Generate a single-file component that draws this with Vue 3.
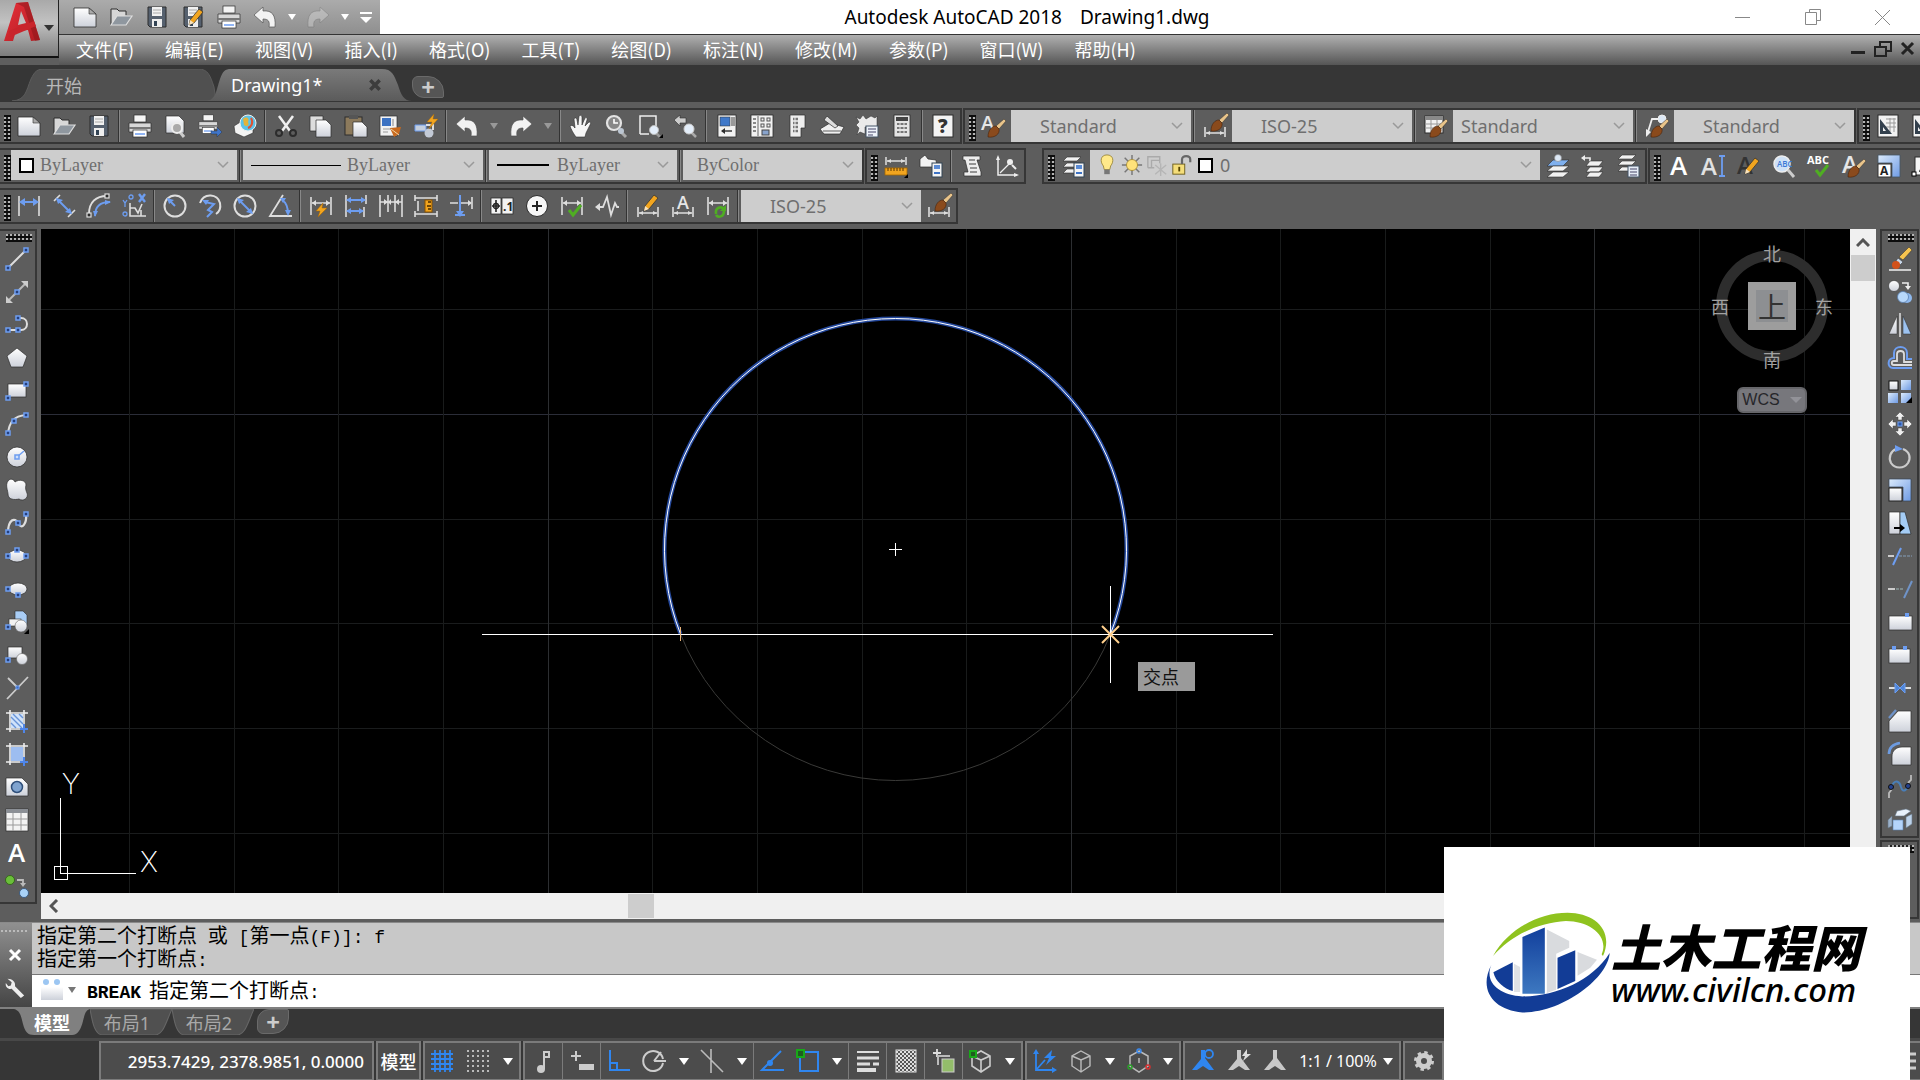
<script setup>
const B = '#6d9df0'
const L = '#dedede'
const G = '#4fae22'
const O = '#f2a51f'
const K = '#2c2c2c'
const W = 'url(#wg)'
const S = 'url(#bg)'

const p = (d, fill = 'none', stroke = 'none', w = 1) =>
  `<path d="${d}" fill="${fill}" stroke="${stroke}" stroke-width="${w}"/>`
const s = (d, stroke = L, w = 2) => p(d, 'none', stroke, w)
const r = (x, y, w, h, fill, stroke = 'none', sw = 1) =>
  `<rect x="${x}" y="${y}" width="${w}" height="${h}" fill="${fill}" stroke="${stroke}" stroke-width="${sw}"/>`
const c = (x, y, rad, fill = 'none', stroke = 'none', w = 1) =>
  `<circle cx="${x}" cy="${y}" r="${rad}" fill="${fill}" stroke="${stroke}" stroke-width="${w}"/>`
const e = (x, y, rx, ry, fill) => `<ellipse cx="${x}" cy="${y}" rx="${rx}" ry="${ry}" fill="${fill}" stroke="${K}" stroke-width="0.7"/>`
const t = (x, y, size, txt, fill = '#fff', weight = 600) =>
  `<text x="${x}" y="${y}" font-size="${size}" fill="${fill}" font-weight="${weight}" font-family="Open Sans, sans-serif">${txt}</text>`
const h = (x, y) => r(x - 2, y - 2, 4, 4, '#27407c', B, 1.5)

const brush = p('M22 5 L24 7 L17 15 L14 12 Z', '#e9c48a', K, 0.5) + p('M6 23 C6 16 10 12 14 12 L17 15 C18 20 13 24 6 23 Z', '#8a4a1c', '#4a240a', 0.6)
const pencil = p('M9 15 L18 4 L22 7 L13 18 L8 20 Z', O, K, 0.7) + p('M9 15 L13 18 L8 20 Z', '#f7e3c0')
const check = s('M9 16 L13 21 L21 11', G, 3)
const floppy = p('M3 2 H21 V22 H5 L3 20 Z', '#56616f', K) + r(7, 2, 10, 9, '#f1f1f1') + s('M8 5 H16 M8 8 H16', '#aaa', 1) + r(7, 14, 10, 8, '#eee') + r(9, 16, 3, 5, '#345')
const printer = r(6, 1, 12, 7, '#f4f4f4', K, 0.7) + p('M1 9 H23 V18 H1 Z', '#d8d8d8', K, 0.7) + r(1, 13, 22, 2, '#777') + r(5, 16, 14, 7, '#fff', K, 0.7) + s('M7 20 H17', B, 1.5)
const dim = s('M2 3 V21 M22 3 V21 M3 9 H21', L, 1.6) + p('M3 9 l4 -3 v6 z M21 9 l-4 -3 v6 z', L)
const dimLow = s('M2 13 V23 M22 13 V23 M3 19 H21', L, 1.6) + p('M3 19 l4 -2 v4 z M21 19 l-4 -2 v4 z', L)
const undo = p('M1 10 L10 2 V6 C19 5 23 10 22 22 H16 C17 16 15 14 10 14 V18 Z', '#f2f2f2', '#555', 0.7)
const redo = `<g transform="matrix(-1 0 0 1 24 0)">${undo}</g>`
const cube = 'M12 2 L21 7 V17 L12 23 L3 17 V7 Z M3 7 L12 11 L21 7 M12 11 V23'
const person = 'M10 1 H14 V9 L23 21 H18 L12 17 L6 21 H1 L10 10 Z'
const layers = p('M6 3 H20 L16 7 H2 Z M6 9 H20 L16 13 H2 Z M6 15 H20 L16 19 H2 Z', '#f1f1f1', K, 0.6)
const frame = s('M5 1 V23 M19 1 V23 M1 4 H23 M1 20 H23', '#eee', 1.6)
const cursorArrow = s('M15 20 H23 M19 15 V24', '#4f86ea', 2)

const icons = {
  new: p('M1 3 H16 L23 9 V22 H1 Z', W, K, 0.8) + p('M16 3 V9 H23 Z', '#aaa', K, 0.6),
  open: p('M2 20 V4 H8 L10 6 H17 V10', '#d7d7d7', K) + p('M2 20 L8 11 H23 L17 20 Z', '#8f979f', L, 1.2),
  save: floppy,
  saveas: floppy + pencil,
  print: printer,
  preview: p('M3 2 H16 L21 7 V19 H3 Z', W, K, 0.7) + s('M17 18 L21 23', '#ccc', 3) + c(14, 14, 5, '#aaa', '#eee', 2),
  publish: `<g transform="scale(.85)">${printer}</g>` + p('M13 17 H19 V13 L24 18 L19 23 V20 H13 Z', '#3f74c8', K, 0.4),
  globe: p('M1 12 L9 7 L20 12 V19 L11 23 L2 19 Z', '#f3f3f3', K, 0.6) + c(15, 9, 8, '#5cc3e8', '#eee') + p('M10 5 C13 2 17 4 15 8 C17 12 13 13 11 11 Z', '#e3b33a') + s('M18 4 C21 9 18 13 15 14', '#de5334', 2),
  cut: s('M5 2 L16 17 M19 2 L8 17', '#f1f1f1', 2.5) + c(5, 19, 3, 'none', K, 2) + c(19, 19, 3, 'none', K, 2),
  copy: p('M1 2 H14 V17 H1 Z', '#ddd', K, 0.7) + p('M7 6 H17 L22 11 V23 H7 Z', W, K, 0.7),
  paste: r(1, 3, 17, 18, '#8c7a5c', K) + r(5, 1, 9, 4, '#555') + p('M9 8 H18 L23 13 V23 H9 Z', W, K, 0.7),
  matchwin: r(1, 2, 17, 20, '#f2f2f2', K, 0.7) + r(3, 4, 9, 8, '#3c72c2') + s('M14 5 V12 M4 15 H12 M4 18 H9', '#999', 1.2) + p('M11 14 L22 13 L20 20 L15 23 Z', '#c96a1e') + s('M12 15 L20 21', '#f5d9a7', 1),
  block: p('M1 11 H12 V17 H1 Z', '#c5cfdd', B, 1) + c(15, 19, 4.5, '#c3cad6') + s('M12 11 L19 11 L19 16', L, 2) + p('M20 0 L13 8 H18 L15 15 L24 5 H19 Z', O, '#a66500', 0.4),
  undo, redo,
  hand: p('M7 23 C4 19 2 15 1 12 C2 11 4 11 6 14 L5 5 C6 3 8 4 8 6 L9 11 L10 2 C11 1 13 1 13 3 L13 11 L16 4 C17 3 19 4 18 6 L16 12 L20 8 C22 8 22 9 21 11 L17 19 L16 23 Z', '#f6f6f6', K, 0.6),
  zoomrt: s('M15 16 L22 23', '#aaa', 3) + c(10, 9, 7, '#888', '#e3e3e3', 2.2) + s('M10 5 V9 H14', '#fff', 1.6) + c(17, 17, 3, '#bcc6d2'),
  zoomwin: s('M1 20 V2 H17 V14', '#eee', 1.5) + s('M1 20 H10', '#eee', 1.5) + s('M17 19 L21 23', '#999', 2.5) + c(15, 16, 4.5, '#e4eefa', '#bbb') + p('M24 20 V24 H20 Z', '#000'),
  zoomprev: p('M0 6 L6 1 V4 H12 V9 H6 V12 Z', '#ccc', K, 0.6) + s('M17 18 L22 23', '#aaa', 2.5) + c(15, 15, 5, '#e4eefa', '#ccc'),
  props: r(3, 1, 18, 22, '#f2f2f2', K, 0.8) + r(5, 3, 10, 9, '#3f78c9', K, 0.5) + r(16, 3, 4, 9, '#999') + s('M7 17 H17', K, 1.4) + p('M6 17 l4 -3 v6 z', K),
  dcenter: r(1, 1, 22, 22, '#f2f2f2', K, 0.8) + s('M8 2 V22', '#666', 1) + s('M3 5 H6 M3 9 H6 M3 13 H6 M3 17 H6', '#666', 1.5) + r(11, 4, 3, 3, 'none', '#555') + r(17, 4, 3, 3, 'none', '#555') + r(11, 10, 3, 3, 'none', '#555') + r(17, 10, 3, 3, 'none', '#555') + r(12, 16, 7, 5, '#88a3cc', '#444'),
  palettes: p('M5 1 H20 V14 H16 V23 H5 Z', '#eee', K, 0.7) + s('M8 5 H13 M8 9 H13 M8 13 H13 M8 17 H13', '#777', 2.4) + s('M10 3 V20', '#eee', 1),
  sheets: p('M0 15 L10 9 L24 13 L20 20 H4 Z', '#f0f0f0', K, 0.7) + p('M7 2 L18 12 L15 14 L4 6 Z', '#ddd', K, 0.7) + s('M3 17 H21', '#888', 1.4),
  markup: p('M1 3 L5 5 L8 1 L11 5 L16 2 L20 4 L22 2 V13 H10 V20 L5 18 L2 21 L4 14 L1 11 L4 8 Z', '#eaeaea', K, 0.5) + r(11, 12, 12, 11, '#eef3fa', '#456') + s('M13 15 H21 M13 18 H21 M13 21 H18', '#446', 1),
  calc: r(4, 1, 16, 22, '#e4e4e4', K, 0.8) + r(6, 3, 12, 4, '#444') + s('M7 10 H17 M7 14 H17 M7 18 H17', '#777', 2) + s('M10 8 V20 M14 8 V20', '#e4e4e4', 1),
  help: r(2, 1, 20, 22, '#f3f3f3', K) + t(7, 19, 19, '?', '#333', 800),
  astyle: t(-1, 16, 20, 'A', '#e6e6e6') + brush,
  dimstyle: dimLow + `<g transform="translate(2 -6)">${brush}</g>`,
  tablestyle: r(1, 2, 18, 17, '#f2f2f2', K) + r(1, 2, 18, 4, '#888') + s('M7 6 V19 M13 6 V19 M1 10 H19 M1 14 H19', '#999', 1) + brush,
  leaderstyle: s('M2 21 L7 5 H14', '#eee', 1.8) + p('M1 23 L1 15 L6 18 Z', '#eee') + c(17, 5, 4, '#dce8f5', '#eee') + brush,
  setsq: r(2, 1, 20, 22, '#f2f2f2', K) + s('M10 5 H20 M10 9 H20 M10 13 H20 M14 4 V18 M18 4 V18', '#999', 1) + p('M4 5 L16 20 H4 Z M7 13 V17 H10 Z', '#33404d'),
  measure: s('M2 3 V11 M22 3 V11 M3 7 H21', L, 1.5) + p('M3 7 l4 -2 v4 z M21 7 l-4 -2 v4 z', L) + r(1, 14, 22, 7, O, '#a86a00', 0.8) + s('M4 14 V17 M7 14 V17 M10 14 V17 M13 14 V17 M16 14 V17 M19 14 V17', '#5a3500', 1) + p('M24 20 V24 H20 Z', '#000'),
  region: p('M1 5 L6 1 L9 5 L17 6 L18 13 H1 Z', '#f3f3f3', K, 0.7) + r(13, 9, 10, 14, '#f4f4f4', '#345') + r(15, 11, 6, 4, '#5b8bd4') + s('M15 19 H21', '#3d73c5', 2),
  script: p('M3 2 H20 V6 H17 L21 18 V22 H4 V18 H8 L5 6 H3 Z', '#ededed', K, 0.7) + s('M9 6 H15 M9 10 H16 M10 14 H17 M10 18 H17', '#777', 1.3),
  ucsicon: s('M3 3 V21 H22', '#eee', 1.5) + p('M3 1 l-2 5 h4 z M24 21 l-5 -2 v4 z', '#eee') + s('M5 19 L14 10', '#eee', 1.2) + c(15, 8, 3, '#eee') + s('M17 11 L21 15', '#eee'),
  layerprop: layers + r(13, 9, 10, 14, '#f4f4f4', '#345') + r(15, 11, 6, 4, '#5b8bd4') + s('M15 19 H21', '#3d73c5', 2),
  layercur: p('M7 6 H23 L17 12 H1 Z', '#7fb0ee', K, 0.6) + p('M7 12 H23 L17 17 H1 Z M7 18 H23 L17 23 H1 Z', '#f1f1f1', K, 0.6) + c(12, 4, 3.5, '#dce8f5', '#888', 0.6),
  layerprev: s('M3 4 H9 V8', '#eee', 1.6) + p('M0 4 l4 -3 v6 z', '#eee') + p('M9 7 H22 L18 12 H5 Z M9 13 H22 L18 18 H5 Z M9 18 H22 L18 23 H5 Z', '#f1f1f1', K, 0.6),
  layerstate: `<g transform="translate(0 -2)">${layers}</g>` + r(12, 12, 11, 11, '#e6edf7', '#456') + s('M14 15 H21 M14 18 H21 M14 21 H21', '#446', 1.2),
  bulb: p('M12 1 C5 1 4 8 8 13 L9 17 H15 L16 13 C20 8 19 1 12 1 Z', '#ffe98a', '#8a7420', 0.8) + r(9, 17, 6, 5, '#777'),
  sun: s('M12 1 V23 M1 12 H23 M4 4 L20 20 M20 4 L4 20', '#777', 1.6) + c(12, 12, 6, '#ffe27a', '#a08222', 0.8),
  vpfreeze: s('M2 15 V3 H15 V10 M15 7 H6 V15 M2 15 H9', '#aaa', 1.5) + s('M10 12 L22 22 M22 12 L10 22 M16 10 V24', '#b5b5b5', 1.5),
  unlock: r(2, 11, 13, 11, '#f5de7a', '#6a5b1a') + s('M12 11 V6 C12 1 21 1 21 6 V9', '#666', 2.4) + r(8, 14, 2, 5, '#554400'),
  mtext: t(3, 21, 26, 'A'),
  dtext: t(-1, 21, 24, 'A', '#e2e2e2') + s('M20 2 V22 M17 2 H23 M17 22 H23', B, 1.8),
  edtext: t(0, 20, 24, 'A', '#333') + pencil,
  findtext: s('M16 16 L22 23', '#ccc', 3) + c(10, 10, 8, '#cfe2f7', '#eee', 1.5) + t(5, 13, 8, 'ABC', '#3c7ad6'),
  spell: t(0, 10, 11, 'ABC', '#fff', 700) + check,
  tstyle: t(0, 19, 24, 'A', '#e6e6e6') + brush,
  scaletext: p('M1 1 H23 V23 H15 V9 H1 Z', S, '#456', 0.8) + r(1, 10, 13, 13, '#fff', '#333') + t(3, 21, 12, 'A', '#222', 700),
  justify: r(3, 3, 20, 18, '#f5f5f5', K) + s('M8 18 L14 6 L18 18 M10 14 H17', '#222', 2.4) + r(0, 18, 4, 4, '#fff', '#000'),
  // dimension row
  dimlin: s('M2 2 V22 M22 2 V22', L, 1.6) + s('M4 8 H20', B, 2) + p('M2 8 l6 -4 v8 z M22 8 l-6 -4 v8 z', B),
  dimali: s('M2 7 L8 1 M16 23 L23 16', L, 1.6) + s('M5 5 L19 19', B, 2) + p('M4 4 l7 2 l-5 4 z M20 20 l-7 -2 l5 -4 z', B),
  dimarc: s('M2 20 C2 8 9 2 20 2', L, 1.8) + s('M8 22 C8 12 13 8 23 8', B, 1.8) + r(0, 19, 4, 4, K, L, 1.2) + r(18, 0, 4, 4, K, L, 1.2) + p('M8 23 l-2 -6 h5 z M24 8 l-6 -2 v5 z', B),
  dimord: s('M1 6 L3 9 L5 6 M3 9 V13', B, 1.3) + c(3, 20, 2, 'none', B, 1.3) + c(9, 3, 2, 'none', B, 1.3) + s('M17 0 L23 8 M23 0 L17 8', B, 2.4) + s('M8 9 V22 H24 M8 14 L13 14 L16 19 L20 10 M19 22 V16', L, 1.6),
  dimrad: c(12, 12, 10.5, 'none', L, 2) + s('M5 5 L12 12', B, 2) + p('M4 4 l7 2 l-5 4 z', B),
  dimjog: s('M2 9 C6 -2 20 0 22 9 C23 14 21 18 18 20', L, 2) + s('M7 8 L16 10 L10 16 L14 18 L9 23', B, 2) + p('M4 6 l7 0 l-3 5 z', B),
  dimdia: c(12, 12, 10.5, 'none', L, 2) + s('M6 6 L18 18', B, 2) + p('M4 4 l7 2 l-5 4 z M20 20 l-7 -2 l5 -4 z', B),
  dimang: s('M15 1 L2 22 H24', L, 1.8) + s('M14 6 C19 9 20 15 20 20', B, 2) + p('M12 4 l6 0 l-3 5 z M20 22 l-3 -6 h6 z', B),
  dimquick: dim + p('M14 9 L7 17 H11 L9 23 L18 14 H13 Z', O, '#a66500', 0.5),
  dimbase: s('M2 1 V23 M22 1 V10 M20 13 V23', L, 1.6) + s('M3 6 H21 M3 17 H19', B, 2) + p('M2 6 l5 -3 v6 z M22 6 l-5 -3 v6 z M2 17 l5 -3 v6 z M20 17 l-5 -3 v6 z', B),
  dimcont: s('M1 1 V23 M9 1 V18 M16 1 V18 M23 1 V23 M1 8 H23', L, 1.6) + p('M9 8 l-4 -3 v6 z M9 8 l3 -3 v6 z M16 8 l4 -3 v6 z', L),
  dimspace: s('M1 1 V7 M23 1 V7 M1 4 H23 M1 17 V23 M23 17 V23 M1 20 H23', L, 1.6) + s('M4 7 V17', L, 1.6) + r(11, 6, 7, 12, O, '#8a5300') + s('M14 8 H17 M13 12 H17 M14 15 H17', '#4a2b00', 1.4),
  dimbreak: s('M1 9 H9 M12 9 H22 M23 3 V15', L, 1.6) + p('M23 9 l-4 -3 v6 z', L) + s('M11 1 V20 M6 21 H16', B, 2) + p('M11 23 l-4 -6 h8 z', B),
  tol: r(1, 4, 10, 16, '#f3f3f3', K, 0.8) + r(12, 4, 11, 16, '#f3f3f3', K, 0.8) + s('M6 6 V18 M2 12 H10', '#222', 1.6) + c(6, 12, 2.5, 'none', '#222', 1.3) + t(13, 17, 12, '.1', '#222', 700),
  cmark: c(12, 12, 10.5, '#f6f6f6', K) + s('M12 7 V17 M7 12 H17', '#222', 2),
  dimins: dim + check,
  jogline: s('M2 13 H8 L12 3 L16 21 L20 9 L22 13 H24', L, 1.8) + p('M0 13 l5 -4 v8 z', L),
  dimedit: dimLow + `<g transform="translate(0 -3)">${pencil}</g>`,
  dimtedit: dimLow + t(6, 15, 18, 'A', '#e6e6e6'),
  dimupd: dim + s('M10 20 C9 13 15 12 18 15 M18 17 C18 23 12 24 10 21', G, 2.6) + p('M20 11 V17 H14 Z', G),
  // draw column
  line: s('M3 21 L21 3', L, 2) + h(3, 21) + h(21, 3),
  xline: s('M4 20 L20 4', '#bbb', 2) + p('M1 23 V16 L8 23 Z M23 1 H16 L23 8 Z', '#ccc') + h(12, 12),
  pline: s('M3 17 H16 C24 17 24 5 16 5 H13', L, 2) + h(3, 17) + h(13, 17) + h(13, 5),
  polygon: p('M12 2 L22 10 L18 21 H6 L2 10 Z', W, K, 0.7),
  rect: r(3, 5, 18, 13, W, K, 0.7) + h(3, 19) + h(21, 5),
  arc: s('M3 22 C4 10 9 4 21 3', L, 2) + h(3, 21) + h(9, 9) + h(21, 3),
  circle: c(12, 12, 10, W, K, 0.7) + s('M12 12 L19 6', B, 1.5) + r(10, 10, 4, 4, '#cfe0fa', B, 1.5),
  cloud: p('M3 3 C5 0 9 1 10 4 C14 1 21 2 21 7 C20 10 21 13 22 15 C24 20 18 24 14 21 C10 22 3 22 3 16 C3 13 0 7 3 3 Z', W, K, 0.7),
  spline: s('M3 22 C3 8 10 6 13 12 C17 20 22 12 21 3', L, 2.2) + h(3, 21) + h(13, 12) + h(21, 3),
  ellipse: e(12, 12, 9, 6, W) + h(3, 12) + h(21, 12) + h(12, 6),
  earc: e(13, 12, 9, 6, W) + h(3, 12) + h(13, 18),
  insert: p('M10 1 H18 L22 5 V16 H10 Z', '#a9cdf5', K, 0.6) + r(4, 9, 12, 7, '#f1f1f1', K, 0.6) + c(16, 16, 6, W, '#666', 0.6) + h(3, 17) + p('M24 19 V24 H19 Z', '#000'),
  mkblock: r(3, 4, 14, 11, W, K, 0.7) + c(17, 16, 5.5, W, '#666', 0.6) + h(3, 17),
  point: s('M3 2 L12 11 M23 1 L2 23', '#ccc', 1.8) + r(11, 10, 3, 3, '#3c6cc5', B),
  hatch: frame + r(6, 5, 12, 14, '#cfe2fa') + s('M6 8 L17 19 M6 14 L11 19 M8 5 L18 15 M14 5 L18 9', '#6893d8', 1.4) + cursorArrow,
  gradient: frame + r(6, 5, 12, 14, '#9dbdf0') + cursorArrow,
  regionD: p('M1 3 H17 L23 9 V21 H1 Z', W, K, 0.7) + c(12, 12, 5.5, '#7fa3cf', '#2f4f7a', 1.5),
  table: r(1, 1, 22, 22, '#f3f3f3', K, 0.7) + r(1, 1, 22, 4, '#8b8f95') + s('M8 5 V23 M16 5 V23 M1 11 H23 M1 17 H23', '#999', 1),
  addsel: c(5, 6, 4.5, '#6abf3a', '#2c5c12', 0.8) + s('M12 6 H18 V10', '#bbb', 1.8) + p('M18 13 l-3 -4 h6 z', '#bbb') + c(19, 19, 4.5, '#a9d2f7', '#2c4f7a', 0.8),
  // modify column
  erase: s('M1 23 H23', '#ccc', 2) + p('M21 0 L24 3 L15 13 L11 10 Z', '#f6c44f', K, 0.5) + p('M10 11 L15 15 L12 18 L8 14 Z', '#c9d8ea', K, 0.5) + c(8, 18, 4, '#d2521b'),
  copyM: c(6, 6, 5.5, W, K, 0.6) + s('M14 3 H20 V7', '#eee', 1.6) + p('M20 10 l-3 -4 h6 z', '#eee') + c(19, 18, 5, '#8fb9ee') + c(15, 17, 5.5, '#b8d8fa', '#5a7fae', 0.8),
  mirror: p('M9 3 V21 H1 Z', W, K, 0.5) + p('M15 3 V21 H23 Z', '#9cc2f0', K, 0.5) + s('M12 0 V24', '#ccc', 1.8),
  offset: s('M24 13 H19 V7 C19 -1 6 -1 6 7 V12 C-1 12 -1 22 5 22 H24', B, 2) + s('M24 19 H6 C3 19 3 15 6 15 H9 V8 C9 4 16 4 16 8 V16 H24', '#ddd', 1.8),
  array: r(1, 2, 9, 9, W, '#111', 1) + r(13, 1, 10, 10, S) + r(0, 14, 10, 10, S) + r(13, 14, 10, 10, S) + p('M24 18 V24 H18 Z', '#000'),
  move: p('M12 0 L17 5 H14 V8 H10 V5 H7 Z M12 24 L17 19 H14 V16 H10 V19 H7 Z M0 12 L5 7 V10 H8 V14 H5 V17 Z M24 12 L19 7 V10 H16 V14 H19 V17 Z', '#eee', '#444', 0.5) + r(10, 10, 4, 4, '#2c57a8', B),
  rotate: s('M15 4 C22 7 23 13 20 18 C16 24 7 24 3 18 C0 12 3 6 8 4', '#ccc', 2.2) + p('M7 0 V7 L15 4 Z', B),
  scale: p('M1 1 H23 V23 H15 V9 H1 Z', S, '#345', 0.7) + r(1, 10, 13, 13, W, '#222', 1),
  stretch: p('M1 1 H12 V23 H1 Z', W, K, 0.7) + p('M12 1 H17 L23 23 H12 Z', '#a4ccf5', K, 0.7) + s('M6 17 H13', '#000', 2) + p('M17 17 l-5 -4 v8 z', '#000'),
  trim: s('M0 12 H6', '#ccc', 2) + `<path d="M11 12 H24" stroke="#789" stroke-width="1.5" stroke-dasharray="3 1"/>` + s('M5 21 L13 4', B, 2),
  extend: s('M0 12 H7', '#ccc', 2) + `<path d="M8 12 H16" stroke="#899" stroke-width="1.5" stroke-dasharray="3 1"/>` + s('M16 21 L24 4', '#6f93c8', 2),
  breakpt: r(1, 6, 23, 14, W, K, 0.7) + r(17, 3, 4, 4, B),
  break: r(1, 6, 21, 14, W, K, 0.7) + r(4, 3, 4, 4, B) + r(15, 3, 4, 4, B),
  join: s('M1 12 H23', '#eee', 1.8) + p('M7 7 L12 12 L7 17 Z M17 7 L12 12 L17 17 Z', '#4f86d8', B),
  chamfer: p('M10 2 H23 V23 H1 V12 Z', W, K, 0.7) + s('M1 9 L8 1', '#6d92c8', 2.4),
  fillet: p('M14 5 H23 V23 H4 V14 C4 9 8 5 14 5 Z', W, K, 0.7) + s('M1 12 C1 5 5 2 12 1', '#6d9be0', 2.6),
  blend: s('M1 23 V18 L4 14 M20 8 L23 5 V0', '#bbb', 1.8) + s('M3 12 C8 2 12 8 13 12 C15 19 19 14 21 11', '#4a7fb8', 2) + c(3, 12, 2.5, '#24418f', '#111') + c(20, 11, 2.5, '#24418f', '#111'),
  explode: p('M5 12 H15 V22 H5 Z', '#b4d4fa', '#5b7fae', 0.6) + p('M9 3 L18 1 L23 3 L16 8 H7 Z', '#e8f1fb', '#678', 0.6) + p('M18 9 L24 6 V16 L18 20 Z', '#bcd2ea', '#678', 0.6) + p('M0 12 L4 8 V18 L0 20 Z', '#9ab0c8', '#678', 0.6),
  wrench: p('M3 1 L8 5 L7 9 L4 10 L1 6 C0 11 4 14 8 13 L19 24 L23 21 L12 10 C13 5 9 1 3 1 Z', '#eee'),
  // status bar
  grid: s('M4 1 V23 M9 1 V23 M14 1 V23 M19 1 V23 M0 5 H22 M0 10 H22 M0 15 H22 M0 20 H22', '#2f86f0', 1.8),
  snap: `<path d="M0 2 H22 M0 7 H22 M0 12 H22 M0 17 H22 M0 22 H22" stroke="#bbb" stroke-width="2" stroke-dasharray="2 3"/>`,
  infer: s('M12 20 V3 H17 V8 H12', '#ccc', 2) + c(9, 20, 4, '#ccc'),
  dyn: s('M6 2 V12 M1 7 H11', '#ccc', 2) + r(9, 15, 15, 6, '#ccc', 'none'),
  ortho: s('M3 1 V21 H23 M3 14 H10 V21', '#2f86f0', 2),
  polar: s('M20 10 A10 10 0 1 0 20 14 M11 12 H23 M11 12 L18 3', '#ccc', 2),
  iso: s('M0 1 L22 23 M10 0 V24', '#bbb', 1.6),
  otrack: s('M24 21 H2 L21 2', '#2f86f0', 2) + c(10, 14, 3, '#2f86f0'),
  osnap: r(4, 3, 18, 19, 'none', '#2f86f0', 2) + r(1, 1, 7, 7, '#1f5c1f', '#18a818', 2),
  lwt: s('M1 3 H23', '#ddd', 2) + s('M1 9 H23', '#ddd', 3) + s('M1 15 H14 M17 15 H23', '#ddd', 3) + s('M1 21 H20', '#ddd', 4),
  trans: `<rect x="2" y="1" width="20" height="22" fill="url(#chk)" stroke="#ddd"/>`,
  cycle: s('M5 0 V8 M1 4 H9', '#ddd', 1.8) + s('M6 16 V7 H18', '#bbb', 2) + r(10, 10, 12, 13, '#93bd6a', '#ccc', 1),
  osnap3: s(cube, '#ccc', 1.6) + r(1, 2, 6, 6, '#1f5c1f', '#18a818', 2),
  ducs: s('M3 2 V21 H22 M3 21 L12 11', '#2f86f0', 1.8) + p('M3 0 l-3 5 h6 z M24 21 l-5 -3 v6 z M19 1 L11 9 H16 L13 16 L23 7 H18 Z', '#2f86f0'),
  selfilt: s(cube, '#bbb', 1.4),
  gizmo: s('M12 2 L21 7 V17 L12 23 L3 17 V7 Z M12 9 V14', '#bbb', 1.5) + c(12, 2, 2, 'none', '#3b8af0', 1.5) + c(3, 18, 2, 'none', '#28a028', 1.5) + c(21, 18, 2, 'none', '#d83030', 1.5),
  annoA: p(person, '#2f86f0') + c(18, 5, 4, '#4c4c4c', '#2f86f0', 1.8),
  annoB: p(person, '#c8c8c8') + p('M20 0 L15 7 H18 L16 12 L24 5 H20 Z', '#ddd'),
  annoC: p(person, '#c8c8c8'),
  gear: `<circle cx="12" cy="12" r="8" fill="none" stroke="#ccc" stroke-width="4" stroke-dasharray="3.14 3.14"/>` + c(12, 12, 5.5, 'none', '#ccc', 5),
}

const SEP = '|'
const DROP = 'v'
const combo = (label, text, size, opt = {}) => ({ label, text, size, ...opt })

const rows = [
  [
    ['new', 'open', 'save', SEP, 'print', 'preview', 'publish', 'globe', SEP, 'cut', 'copy', 'paste', 'matchwin', 'block', SEP,
      'undo', DROP, 'redo', DROP, SEP, 'hand', 'zoomrt', 'zoomwin', 'zoomprev', SEP, 'props', 'dcenter', 'palettes', 'sheets', 'markup', 'calc', SEP, 'help'],
    ['astyle', combo('文字样式', 'Standard', 'std', { inset: true }), SEP, 'dimstyle', combo('标注样式', 'ISO-25', 'std', { inset: true }), SEP,
      'tablestyle', combo('表格样式', 'Standard', 'std'), SEP, 'leaderstyle', combo('多重引线样式', 'Standard', 'std', { inset: true })],
    ['setsq', 'setsq'],
  ],
  [
    [combo('颜色', 'ByLayer', 'color', { lead: 'swatch', serif: true }), SEP, combo('线型', 'ByLayer', 'ltype', { lead: 'thin', serif: true }), SEP,
      combo('线宽', 'ByLayer', 'lweight', { lead: 'thick', serif: true }), SEP, combo('打印样式', 'ByColor', 'std', { serif: true, mid: true })],
    ['measure', 'region', SEP, 'script', 'ucsicon'],
    ['layerprop', combo('图层', '0', 'layer', { lead: 'layer' }), 'layercur', 'layerprev', 'layerstate'],
    ['mtext', 'dtext', 'edtext', 'findtext', 'spell', 'tstyle', 'scaletext', 'justify'],
  ],
  [
    ['dimlin', 'dimali', 'dimarc', 'dimord', SEP, 'dimrad', 'dimjog', 'dimdia', 'dimang', SEP, 'dimquick', 'dimbase', 'dimcont', 'dimspace', 'dimbreak', SEP,
      'tol', 'cmark', 'dimins', 'jogline', SEP, 'dimedit', 'dimtedit', 'dimupd', SEP, combo('当前标注样式', 'ISO-25', 'std', { inset: true }), 'dimstyle'],
  ],
]

const quick = ['new', 'open', 'save', 'saveas', 'print', 'undo', DROP, 'redo', DROP]
const menus = ['文件(F)', '编辑(E)', '视图(V)', '插入(I)', '格式(O)', '工具(T)', '绘图(D)', '标注(N)', '修改(M)', '参数(P)', '窗口(W)', '帮助(H)']
const drawTools = ['line', 'xline', 'pline', 'polygon', 'rect', 'arc', 'circle', 'cloud', 'spline', 'ellipse', 'earc', 'insert', 'mkblock', 'point', 'hatch', 'gradient', 'regionD', 'table', 'mtext', 'addsel']
const modifyTools = ['erase', 'copyM', 'mirror', 'offset', 'array', 'move', 'rotate', 'scale', 'stretch', 'trim', 'extend', 'breakpt', 'break', 'join', 'chamfer', 'fillet', 'blend', 'explode']

const statusGroups = [
  [['grid', 'snap', DROP]],
  [['infer'], ['dyn'], ['ortho', 'polar', DROP, 'iso', DROP], ['otrack', 'osnap', DROP], ['lwt'], ['trans'], ['cycle'], ['osnap3', DROP]],
  [['ducs', 'selfilt', DROP, 'gizmo', DROP]],
  [['annoA', 'annoB', 'annoC', '#1:1 / 100%', DROP]],
  [['gear']],
]

const gridX = Array.from({ length: 17 }, (_, i) => ({ at: Math.round(88 + i * 104.67), major: i % 5 === 4 }))
const gridY = Array.from({ length: 6 }, (_, i) => ({ at: Math.round(80 + i * 104.75), major: i === 1 }))
</script>

<template>
  <div class="app">
    <svg class="defs" width="0" height="0" aria-hidden="true">
      <defs>
        <linearGradient id="wg" x1="0" y1="0" x2="0" y2="1"><stop offset="0" stop-color="#fff" /><stop offset="1" stop-color="#cdd1da" /></linearGradient>
        <linearGradient id="bg" x1="0" y1="0" x2="1" y2="1"><stop offset="0" stop-color="#dcebfc" /><stop offset="1" stop-color="#6f9be4" /></linearGradient>
        <linearGradient id="tabOn" x1="0" y1="0" x2="0" y2="1"><stop offset="0" stop-color="#7a7a7a" /><stop offset="1" stop-color="#5b5b5b" /></linearGradient>
        <linearGradient id="red" x1="0" y1="0" x2="1" y2="1"><stop offset="0" stop-color="#e8303a" /><stop offset="1" stop-color="#b01c22" /></linearGradient>
        <linearGradient id="tower" x1="0" y1="0" x2="0" y2="1"><stop offset="0" stop-color="#123f9c" /><stop offset="1" stop-color="#3d78c0" /></linearGradient>
        <pattern id="chk" width="4" height="4" patternUnits="userSpaceOnUse"><rect width="4" height="4" fill="#555" /><path d="M0 0h2v2H0zM2 2h2v2H2z" fill="#ddd" /></pattern>
      </defs>
    </svg>

    <header class="head">
      <button class="appbtn" aria-label="应用程序菜单">
        <svg width="36" height="42" viewBox="0 0 36 42">
          <path d="M0 40 L12 2 L24 1 L36 39 L27 40 L24 29 L12 30 L9 40 Z M17 10 L14 24 L22 22 Z" fill="url(#red)" fill-rule="evenodd" />
          <path d="M12 2 L24 1 L36 39 L31 40 L20 6 Z" fill="#8e171c" opacity=".55" />
          <path d="M5 30 L30 20 L32 25 L6 36 Z" fill="#c9242b" />
        </svg>
        <i class="tri dark"></i>
      </button>
      <div class="headrows">
        <div class="titlebar">
          <div class="quick">
            <template v-for="(q, i) in quick" :key="i">
              <button v-if="q === DROP" class="drop" aria-label="展开"><i class="tri"></i></button>
              <button v-else class="tool" :class="{ faded: q === 'redo' }" :aria-label="q"><svg class="ico" viewBox="0 0 24 24" v-html="icons[q]"></svg></button>
            </template>
            <button class="drop more" aria-label="自定义"><i class="bar"></i><i class="tri"></i></button>
          </div>
          <h1 class="title"><span>Autodesk AutoCAD 2018</span><span>Drawing1.dwg</span></h1>
          <div class="wincontrols">
            <button aria-label="最小化"><svg width="16" height="16"><path d="M0 8.5H15" /></svg></button>
            <button aria-label="还原"><svg width="16" height="16"><path d="M.5 3.5H11.500V15.500H.5ZM4.500 3.500V.5H15.500V11.500H11.500" /></svg></button>
            <button aria-label="关闭"><svg width="16" height="16"><path d="M0 1L15 16M15 1L0 16" /></svg></button>
          </div>
        </div>
        <nav class="menubar">
          <button v-for="m in menus" :key="m">{{ m }}</button>
          <div class="mdi">
            <button aria-label="最小化图形"><svg width="18" height="18"><path d="M2 12.500H16" stroke-width="3" /></svg></button>
            <button aria-label="还原图形"><svg width="18" height="18"><path d="M1 7H12V16H1ZM6 7V2H17V11H12" stroke-width="2" /></svg></button>
            <button aria-label="关闭图形"><svg width="18" height="18"><path d="M3 3L14 14M14 3L3 14" stroke-width="3" /></svg></button>
          </div>
        </nav>
      </div>
    </header>

    <div class="filetabs">
      <button class="ftab">
        <svg viewBox="0 0 206 32" preserveAspectRatio="none"><path d="M0 32 C14 31 14 22 19 10 C23 2 25 0 33 0 H186 C196 0 198 6 202 18 L204 32 Z" fill="#505050" stroke="#5c5c5c" /></svg>
        <span>开始</span>
      </button>
      <button class="ftab on">
        <svg viewBox="0 0 206 32" preserveAspectRatio="none"><path d="M0 32 C10 31 10 22 14 10 C17 2 19 0 25 0 H176 C186 0 188 6 192 16 C195 26 198 32 206 32 Z" fill="url(#tabOn)" /></svg>
        <span>Drawing1*</span>
        <svg class="x" viewBox="0 0 12 12"><path d="M2 2L10 10M10 2L2 10" stroke="#3c3c3c" stroke-width="3" /></svg>
      </button>
      <button class="plus up" aria-label="新图形">+</button>
    </div>

    <div class="toolbars">
      <div v-for="(row, ri) in rows" :key="ri" class="trow" :class="'row' + (ri + 1)">
        <div v-for="(bar, bi) in row" :key="bi" class="bar-frame">
          <i class="grip"></i>
          <template v-for="(it, i) in bar" :key="i">
            <i v-if="it === SEP" class="sep"></i>
            <button v-else-if="it === DROP" class="drop" aria-label="展开"><i class="tri dim"></i></button>
            <button v-else-if="typeof it === 'string'" class="tool" :aria-label="it"><svg class="ico" viewBox="0 0 24 24" v-html="icons[it]"></svg></button>
            <label v-else class="combo" :class="[it.size, { inset: it.inset, mid: it.mid, serif: it.serif }]">
              <i v-if="it.lead === 'swatch'" class="swatch"></i>
              <i v-else-if="it.lead === 'thin' || it.lead === 'thick'" :class="it.lead"></i>
              <template v-else-if="it.lead === 'layer'">
                <svg v-for="n in ['bulb', 'sun', 'vpfreeze', 'unlock']" :key="n" class="ico" viewBox="0 0 24 24" v-html="icons[n]"></svg>
                <i class="swatch"></i>
              </template>
              <select :aria-label="it.label" disabled><option>{{ it.text }}</option></select>
              <svg class="chev" viewBox="0 0 12 8"><path d="M1 1L6 6L11 1" /></svg>
            </label>
          </template>
        </div>
      </div>
    </div>

    <main class="work">
      <aside class="side left">
        <div class="side-frame">
          <i class="grip h"></i>
          <button v-for="n in drawTools" :key="n" :aria-label="n"><svg class="ico" viewBox="0 0 24 24" v-html="icons[n]"></svg></button>
        </div>
      </aside>

      <div class="view">
        <div class="canvas">
          <svg class="drawing">
            <g shape-rendering="crispEdges">
              <line v-for="g in gridY" :key="'y' + g.at" x1="0" x2="100%" :y1="g.at" :y2="g.at" :stroke="g.major ? '#2b2d38' : '#1a1c1d'" />
              <line v-for="g in gridX" :key="'x' + g.at" y1="0" y2="100%" :x1="g.at" :x2="g.at" :stroke="g.major ? '#2c2e31' : '#191b1b'" />
            </g>
            <path d="M639.500 405 A231 231 0 0 0 1069.500 405" fill="none" stroke="#3a3a38" />
            <path d="M639.500 405 A231 231 0 1 1 1069.500 405" fill="none" stroke="#24489c" stroke-width="4" />
            <path d="M639.500 405 A231 231 0 1 1 1069.500 405" fill="none" stroke="#fff" stroke-width="1" />
            <g fill="none" stroke="#fff" shape-rendering="crispEdges">
              <path d="M441 405.500H1232M1069.500 357V454M848 320.500H861M854.500 314V327" />
              <path d="M19.500 569V644.500H95M13.500 637.500H26.500V650.500H13.500Z" />
            </g>
            <path d="M639.500 398V412" stroke="#e6b27a" />
            <path d="M1061 397L1078 414M1078 397L1061 414" stroke="#ffd08c" stroke-width="2" />
            <text class="axis" x="30" y="565">Y</text>
            <text class="axis" x="108" y="643">X</text>
          </svg>
          <span class="tip">交点</span>
          <div class="cube">
            <div class="compass">
              <span class="n">北</span><span class="w">西</span><button class="face">上</button><span class="e">东</span><span class="s">南</span>
            </div>
            <button class="wcs">WCS <i class="tri"></i></button>
          </div>
        </div>
        <div class="hscroll">
          <svg viewBox="0 0 10 14"><path d="M8 1L2 7L8 13" /></svg>
          <i></i>
        </div>
      </div>
      <div class="vscroll">
        <svg viewBox="0 0 14 10"><path d="M1 8L7 2L13 8" /></svg>
        <i></i>
      </div>

      <aside class="side right">
        <div class="side-frame">
          <i class="grip h"></i>
          <button v-for="n in modifyTools" :key="n" :aria-label="n"><svg class="ico" viewBox="0 0 24 24" v-html="icons[n]"></svg></button>
        </div>
        <div class="side-frame rest"><i class="grip h"></i></div>
      </aside>
    </main>

    <section class="command">
      <div class="cmdside">
        <i class="dots"></i>
        <button aria-label="关闭命令行"><svg width="14" height="14" viewBox="0 0 14 14"><path d="M2 2L12 12M12 2L2 12" stroke="#fff" stroke-width="3" /></svg></button>
        <button aria-label="自定义"><svg width="20" height="20" viewBox="0 0 24 24" v-html="icons.wrench"></svg></button>
      </div>
      <div class="cmdmain">
        <div class="history">
          <p>指定第二个打断点<code>&nbsp;</code>或<code>&nbsp;[</code>第一点<code>(F)]: f</code></p>
          <p>指定第一个打断点<code>:</code></p>
        </div>
        <div class="prompt">
          <svg class="ico" viewBox="0 0 24 24"><rect x="1" y="9" width="22" height="13" fill="url(#wg)" /><circle cx="6" cy="4" r="3" fill="#9cc6f2" /><circle cx="17" cy="4" r="3" fill="#9cc6f2" /></svg>
          <i class="tri grey"></i>
          <label for="cmd"><code class="b">BREAK</code>指定第二个打断点<code>:</code></label>
          <input id="cmd" type="text" />
        </div>
      </div>
    </section>

    <nav class="layouts">
      <button class="ltab on"><svg viewBox="0 0 76 26" preserveAspectRatio="none"><path d="M0 0 C7 2 7 8 9 15 C11 23 14 26 20 26 H58 C64 26 67 20 69 12 C71 4 72 1 76 0 Z" fill="#808080" /></svg><span>模型</span></button>
      <button class="ltab"><svg viewBox="0 0 76 26" preserveAspectRatio="none"><path d="M0 0 C2 12 4 26 12 26 H60 C68 26 70 14 76 0 Z" fill="#505050" stroke="#666" /></svg><span>布局1</span></button>
      <button class="ltab"><svg viewBox="0 0 76 26" preserveAspectRatio="none"><path d="M0 0 C2 12 4 26 12 26 H60 C68 26 70 14 76 0 Z" fill="#505050" stroke="#666" /></svg><span>布局2</span></button>
      <button class="plus down" aria-label="新建布局">+</button>
    </nav>

    <footer class="status">
      <div class="sgroup coords">2953.7429, 2378.9851, 0.0000</div>
      <button class="sgroup model">模型</button>
      <div v-for="(g, gi) in statusGroups" :key="gi" class="sgroup">
        <div v-for="(cell, ci) in g" :key="ci" class="cell">
          <template v-for="(n, i) in cell" :key="i">
            <button v-if="n === DROP" class="sdrop" aria-label="展开"><i class="tri"></i></button>
            <button v-else-if="n[0] === '#'" class="stext">{{ n.slice(1) }}</button>
            <button v-else class="sbtn" :aria-label="n"><svg class="ico" viewBox="0 0 24 24" v-html="icons[n]"></svg></button>
          </template>
        </div>
      </div>
      <div class="sgroup fill"><svg width="10" height="20"><path d="M0 3H6M0 10H6M0 17H6" stroke="#ccc" stroke-width="3" /></svg></div>
    </footer>

    <a class="watermark" href="#">
      <svg width="127" height="104" viewBox="0 0 380 310">
        <path d="M27 137 C70 60 160 8 250 8 C330 8 390 60 356 137 L352 132 C375 80 320 32 245 32 C165 36 80 75 27 137 Z" fill="#8fc31f" />
        <path d="M22 163 C0 215 45 255 115 258 C215 258 325 210 376 128 C372 200 240 306 115 306 C30 300 -18 240 22 163 Z" fill="#123c96" />
        <path d="M28 186 L86 156 V242 C60 235 35 215 28 186 Z" fill="#123c96" />
        <path d="M90 160 L108 170 V245 H90 Z" fill="#e0e2e5" />
        <path d="M115 80 L182 52 V250 H115 Z" fill="url(#tower)" />
        <path d="M188 58 L255 92 V112 L216 130 V238 L188 248 Z" fill="#d9dbde" />
        <path d="M220 142 L273 120 V212 L220 236 Z" fill="#123c96" />
        <path d="M280 125 L338 148 L318 172 L280 196 Z" fill="#d9dbde" />
      </svg>
      <span class="wm-text"><b>土木工程网</b><em>www.civilcn.com</em></span>
    </a>
  </div>
</template>

<style>
body { margin: 0; background: #363636; }
</style>

<style scoped>
.app { position: relative; display: flex; flex-direction: column; min-height: 100vh; overflow: hidden; background: #363636; color: #fff; font-family: "Noto Sans", "Noto Sans CJK SC", sans-serif; font-size: 18px; }
.app *, .compass::before { box-sizing: border-box; }
.defs { position: absolute; }
button { display: flex; align-items: center; justify-content: center; margin: 0; padding: 0; border: 0; background: none; color: inherit; font: inherit; white-space: nowrap; }
i { display: block; flex: none; }
svg { flex: none; }
.ico { width: 24px; height: 24px; overflow: visible; }
.tri { width: 0; height: 0; border: 4px solid transparent; border-top: 6px solid #fff; border-bottom: 0; }
.tri.dark { border-width: 5px; border-top: 6px solid #333; border-bottom: 0; }
.tri.dim { border-top-color: #999; }
.tri.grey { border-top-color: #777; margin: 0 11px 0 4px; }

.head { display: flex; background: #5e5e5e; }
.appbtn { width: 59px; height: 58px; flex: none; align-items: flex-start; padding-top: 1px; gap: 4px; background: linear-gradient(#a9a9a9, #c2c2c2 40%, #7c7c7c); border-right: 1px solid #222; border-bottom: 2px solid #111; }
.appbtn .tri { margin-top: 24px; }
.headrows { flex: 1; min-width: 0; }
.titlebar { display: flex; align-items: stretch; height: 35px; background: #fff; border-bottom: 1px solid #333; }
.quick { display: flex; padding-left: 8px; width: 321px; background: linear-gradient(#ababab, #8f8f8f); }
.quick .tool { width: 36px; }
.quick .drop { width: 17px; }
.quick .more { flex-direction: column; gap: 3px; width: 26px; }
.more .bar { width: 12px; height: 2px; background: #fff; }
.more .tri { border-width: 6px; border-top: 6px solid #fff; border-bottom: 0; }
.faded { opacity: 0.3; }
.title { flex: 1; display: flex; justify-content: center; align-items: center; gap: 18px; margin: 0; padding-right: 34px; color: #000; font-size: 19px; font-weight: 400; line-height: 26px; white-space: nowrap; }
.wincontrols { display: flex; width: 212px; }
.wincontrols button { width: 70px; }
.wincontrols path { fill: none; stroke: #888; }
.menubar { display: flex; align-items: center; gap: 31px; height: 30px; padding: 0 3px 2px 17px; background: linear-gradient(#b0b0b0, #555); font-family: "Noto Sans CJK SC", sans-serif; font-size: 18px; font-weight: 400; line-height: 28px; }
.mdi { display: flex; gap: 7px; margin-left: auto; }
.mdi path { fill: none; stroke: #222; }

.filetabs { display: flex; align-items: flex-end; height: 37px; padding: 0 0 1px 12px; background: #363636; }
.ftab { position: relative; width: 206px; height: 32px; justify-content: flex-start; padding-left: 34px; color: #b8b8b8; font-size: 18px; }
.ftab > svg:first-child, .ltab > svg { position: absolute; inset: 0; width: 100%; height: 100%; }
.ftab span, .ltab span { position: relative; }
.ftab.on { margin-left: -12px; padding-left: 25px; color: #fff; }
.ftab .x { position: relative; width: 14px; height: 14px; margin-left: auto; margin-right: 30px; }
.plus { width: 32px; height: 22px; background: #555; border: 1px solid #6a6a6a; color: #ccc; font-size: 24px; font-weight: 700; line-height: 20px; }
.plus.up { border-radius: 6px 16px 2px 12px; margin: 0 0 3px 0; }
.plus.down { border-radius: 12px 2px 16px 6px; }

.toolbars { display: flex; flex-direction: column; gap: 4px; padding: 6px 0 5px; background: #5d5d5d; overflow: hidden; }
.trow { display: flex; gap: 1px; height: 36px; }
.bar-frame { display: flex; flex: none; align-items: stretch; border: 2px solid #363636; background: #5d5d5d; }
.bar-frame:first-child { border-left: 0; }
.row2 .bar-frame:nth-child(3) { margin-left: 15px; }
.grip { width: 7px; margin: 5px 0 1px 4px; background: repeating-linear-gradient(0deg, #0c0c0c 0 2px, transparent 2px 4px), repeating-linear-gradient(90deg, #b5b5b5 0 2px, #222 2px 4px); }
.tool { width: 35px; flex: none; }
.drop { width: 19px; flex: none; }
.sep { width: 2px; margin: 0 2px; border-left: 1px solid #333; border-right: 1px solid #888; }
.combo { display: flex; align-items: center; flex: none; height: 32px; padding: 0 8px; background: #cdcdcd; color: #6f6f6f; }
.row2 .combo { height: 30px; }
.combo.std { width: 180px; }
.combo.inset { padding-left: 29px; }
.combo.mid { padding-left: 14px; }
.row2 .combo.std { width: 179px; }
.combo.color { width: 226px; }
.combo.ltype { width: 240px; }
.combo.lweight { width: 188px; }
.combo.layer { width: 450px; padding-left: 6px; }
.combo .ico { width: 22px; height: 22px; margin-right: 3px; }
.combo select { flex: 1; min-width: 0; margin: 0; padding: 0; border: 0; appearance: none; background: none; color: #6f6f6f; opacity: 1; font: inherit; }
.combo.serif select { font-family: "Liberation Serif", serif; font-size: 18px; }
.chev { width: 12px; height: 8px; }
.chev path { fill: none; stroke: #999; stroke-width: 1.5; }
.swatch { width: 15px; height: 15px; margin-right: 6px; border: 2px solid #000; background: #fff; }
.layer .swatch { margin: 0 7px 0 2px; }
.thin { width: 90px; height: 1px; margin-right: 6px; background: #000; }
.thick { width: 52px; height: 2px; margin-right: 8px; background: #000; }

.work { display: flex; flex: 1; min-height: 690px; background: #5d5d5d; padding-bottom: 3px; }
.side { flex: none; display: flex; flex-direction: column; }
.side.left { width: 41px; }
.side.right { width: 44px; padding-left: 4px; gap: 2px; }
.side-frame { width: 37px; border: 2px solid #363636; border-left: 0; background: #5d5d5d; }
.right .side-frame { width: 39px; border-left: 2px solid #363636; }
.side-frame.rest { flex: 1; }
.grip.h { width: 26px; height: 8px; margin: 3px 0 0 6px; }
.side-frame button { width: 34px; height: 33px; }
.right .side-frame button { width: 35px; }
.view { display: flex; flex-direction: column; flex: 1; min-width: 0; }
.canvas { position: relative; flex: 1; background: #000; overflow: hidden; }
.drawing { position: absolute; inset: 0; width: 100%; height: 100%; }
.axis { font-family: Inter, sans-serif; font-size: 28px; font-weight: 200; fill: #fff; text-anchor: middle; }
.tip { position: absolute; left: 1097px; top: 433px; width: 57px; height: 29px; padding-left: 5px; background: #9a9a9a; color: #111; font: 400 18px/28px "Noto Sans CJK SC", sans-serif; }
.cube { position: absolute; right: 13px; top: 11px; width: 130px; display: flex; flex-direction: column; align-items: center; gap: 15px; }
.compass { position: relative; display: grid; grid-template: 26px 80px 26px / 26px 78px 26px; place-items: center; color: #a2a2a2; font: 400 18px/20px "Noto Sans CJK SC", sans-serif; }
.compass::before { content: ""; position: absolute; left: 9px; top: 10px; width: 112px; height: 112px; border: 11px solid #2d2d2d; border-radius: 50%; }
.compass span, .face { position: relative; }
.compass .n, .compass .s { grid-column: 2; }
.compass .n { grid-row: 1; }
.compass .w { grid-area: 2 / 1; }
.compass .e { grid-area: 2 / 3; }
.compass .s { grid-row: 3; }
.face { grid-area: 2 / 2; width: 48px; height: 48px; border: 8px solid #9d9d9d; background: #8d8f92; color: #333; font: 400 28px/30px "Noto Sans CJK SC", sans-serif; }
.wcs { width: 70px; height: 26px; gap: 10px; border: 2px solid #66666a; border-radius: 6px; background: #77777c; color: #26262a; font: 400 16px/20px "Liberation Sans", sans-serif; }
.wcs .tri { border-width: 6px; border-top: 6px solid #929298; border-bottom: 0; }
.hscroll { display: flex; align-items: center; height: 26px; padding-left: 8px; background: #f0f0f0; }
.hscroll svg { width: 10px; height: 14px; }
.hscroll path, .vscroll path { fill: none; stroke: #555; stroke-width: 3; }
.hscroll i { width: 26px; height: 24px; margin-left: 569px; background: #cdcdcd; }
.vscroll { display: flex; flex-direction: column; align-items: center; width: 26px; flex: none; padding-top: 9px; background: #f0f0f0; }
.vscroll svg { width: 14px; height: 10px; }
.vscroll i { width: 24px; height: 26px; margin-top: 7px; background: #cdcdcd; }

.command { display: flex; height: 87px; flex: none; border-top: 1px solid #8a8a8a; border-bottom: 2px solid #808080; }
.cmdside { display: flex; flex-direction: column; align-items: center; width: 32px; flex: none; padding: 7px 2px 0 0; background: linear-gradient(#909090, #454545); }
.dots { width: 28px; height: 2px; background: repeating-linear-gradient(90deg, #bbb 0 2px, transparent 2px 4px); }
.cmdside button { margin-top: 16px; }
.cmdmain { flex: 1; min-width: 0; color: #000; font: 400 20px/23px "Noto Sans CJK SC", sans-serif; }
.history { height: 52px; padding: 0 5px; background: #c8c8c8; border-bottom: 1px solid #777; }
.history p { margin: 0; height: 23px; white-space: nowrap; }
code { font-family: "Liberation Mono", monospace; font-size: 18px; font-weight: 400; line-height: 20px; }
code.b { font-weight: 700; margin-right: 8px; }
.prompt { display: flex; align-items: center; height: 32px; padding: 0 0 2px 8px; background: #fff; }
.prompt label { flex: none; }
.prompt input { flex: 1; min-width: 0; height: 28px; border: 0; outline: 0; background: none; font: inherit; }

.layouts { display: flex; height: 32px; flex: none; padding-left: 14px; border-bottom: 3px solid #484848; background: #363636; }
.ltab { position: relative; width: 76px; height: 26px; color: #a8a8a8; font-size: 18px; }
.ltab + .ltab { width: 82px; padding-right: 8px; }
.ltab.on { color: #fff; font-weight: 700; font-family: "Noto Sans CJK SC", sans-serif; }
.plus.down { margin: 0 0 0 3px; height: 25px; }

.status { display: flex; gap: 2px; height: 39px; flex: none; padding-left: 99px; background: #363636; font-size: 17px; }
.sgroup { display: flex; align-items: center; flex: none; border: 2px solid #7b7b7b; border-bottom-width: 1px; background: #4c4c4c; }
.coords { width: 275px; justify-content: flex-end; padding-right: 8px; font-weight: 500; }
.model { width: 45px; font-family: "Noto Sans CJK SC", sans-serif; font-weight: 500; font-size: 18px; }
.cell { display: flex; align-self: stretch; }
.cell + .cell { border-left: 1px solid #7b7b7b; }
.sbtn { width: 36px; }
.sbtn:only-child { width: 37px; }
.sdrop { width: 22px; }
.sdrop .tri { border-width: 5px; border-top: 7px solid #fff; border-bottom: 0; }
.stext { width: 84px; padding-left: 6px; font-size: 16px; }
.sgroup.fill { flex: 1; justify-content: flex-end; border-right: 0; }

.watermark { position: absolute; right: 10px; bottom: 0; display: flex; align-items: center; width: 466px; height: 233px; padding: 0 0 3px 40px; background: #fff; color: #000; text-decoration: none; }
.wm-text { display: flex; flex-direction: column; white-space: nowrap; padding-top: 6px; }
.wm-text b { font: italic 900 50px/50px "Noto Sans CJK SC", sans-serif; }
.wm-text em { font: italic 500 33px/40px "Noto Sans", sans-serif; }
</style>
